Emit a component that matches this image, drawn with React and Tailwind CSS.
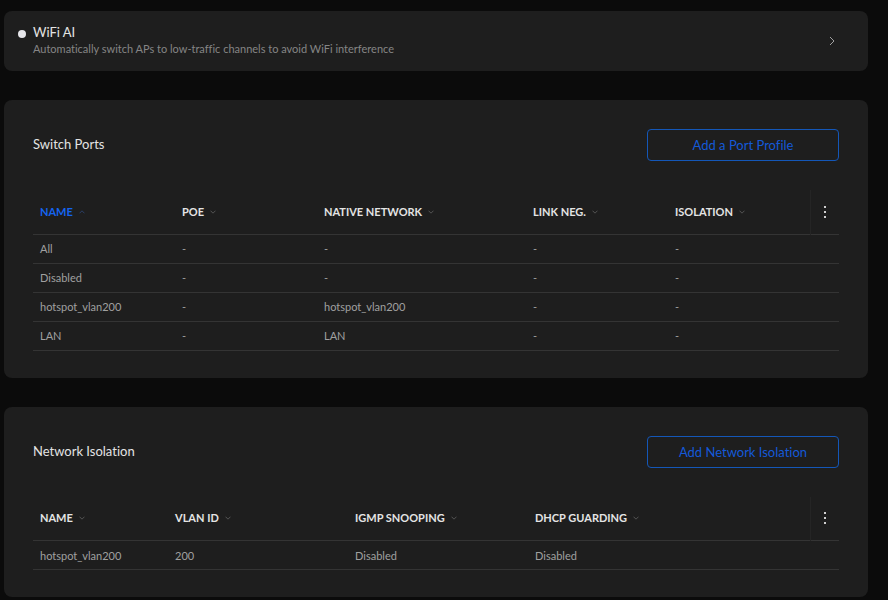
import { useState } from 'react';

const portColumns = [
  { label: 'NAME', width: 'w-[142px]' },
  { label: 'POE', width: 'w-[142px]' },
  { label: 'NATIVE NETWORK', width: 'w-[209px]' },
  { label: 'LINK NEG.', width: 'w-[142px]' },
  { label: 'ISOLATION', width: 'w-[142px]' },
];

const portRows = [
  ['All', '-', '-', '-', '-'],
  ['Disabled', '-', '-', '-', '-'],
  ['hotspot_vlan200', '-', 'hotspot_vlan200', '-', '-'],
  ['LAN', '-', 'LAN', '-', '-'],
];

const isolationColumns = [
  { label: 'NAME', width: 'w-[135px]' },
  { label: 'VLAN ID', width: 'w-[180px]' },
  { label: 'IGMP SNOOPING', width: 'w-[180px]' },
  { label: 'DHCP GUARDING', width: 'w-[282px]' },
];

const isolationRows = [['hotspot_vlan200', '200', 'Disabled', 'Disabled']];

function SortArrow({ up }) {
  return (
    <svg
      className={up ? 'h-1 w-[6px] text-[#2c4470]' : 'h-1 w-[6px] text-[#5a5a5a]'}
      viewBox="0 0 6 4"
      fill="none"
      stroke="currentColor"
      strokeWidth={0.9}
    >
      <path d={up ? 'M0.5 3.3L3 0.8L5.5 3.3' : 'M0.5 0.7L3 3.2L5.5 0.7'} />
    </svg>
  );
}

function DataTable({ columns, rows, initialSort }) {
  const [sortedBy, setSortedBy] = useState(initialSort);

  return (
    <table className="w-full table-fixed border-collapse text-left text-[11px]">
      <thead>
        <tr className="h-11 border-b border-[#343434]">
          {columns.map((column) => {
            const active = sortedBy === column.label;
            return (
              <th key={column.label} className={`${column.width} p-0 pl-[7px]`}>
                <button
                  type="button"
                  onClick={() => setSortedBy(column.label)}
                  className={`flex items-center gap-[6px] font-bold ${active ? 'text-[#1464f0]' : 'text-[#e4e4e4]'}`}
                >
                  {column.label}
                  <SortArrow up={active} />
                </button>
              </th>
            );
          })}
          <th className="w-[29px] border-l border-[#252525] p-0">
            <button type="button" aria-label="Table options" className="flex w-full items-center justify-center">
              <svg className="h-3 w-[2px] text-[#cfcfcf]" viewBox="0 0 2 12" fill="currentColor">
                <rect y="0" width="2" height="2" />
                <rect y="5" width="2" height="2" />
                <rect y="10" width="2" height="2" />
              </svg>
            </button>
          </th>
        </tr>
      </thead>
      <tbody>
        {rows.map((row) => (
          <tr key={row[0]} className="h-[29px] border-b border-[#343434] text-[#a0a0a0]">
            {row.map((cell, i) => (
              <td key={i} className="p-0 pt-[2px] pl-[7px]">
                {cell}
              </td>
            ))}
            <td className="p-0" />
          </tr>
        ))}
      </tbody>
    </table>
  );
}

function Section({ title, action, children }) {
  return (
    <section className="rounded-lg bg-[#1e1e1e] px-[29px] pt-[29px] pb-[27px]">
      <div className="mb-[29px] flex items-center justify-between">
        <h2 className="text-[13px] text-[#e4e4e4]">{title}</h2>
        <button
          type="button"
          className="h-8 w-48 rounded-[4px] border border-[#1457b8] pt-[2px] text-[13px] text-[#1459d8] hover:bg-[#1457d0]/10"
        >
          {action}
        </button>
      </div>
      {children}
    </section>
  );
}

export default function App() {
  return (
    <div className="min-h-screen bg-[#0b0b0b] font-['Lato',sans-serif] [font-variant-ligatures:none]">
      <main className="flex flex-col gap-[29px] pt-[11px] pr-5 pl-1">
        {/* WiFi AI */}
        <button type="button" className="flex h-[60px] items-center rounded-lg bg-[#1e1e1e] pr-8 pl-[14px] text-left">
          <span className="mr-[7px] mb-[14px] h-2 w-2 rounded-full bg-[#e6e6ea]" />
          <span className="flex flex-1 flex-col">
            <span className="text-[13px] leading-4 text-[#e4e4e4]">WiFi AI</span>
            <span className="text-[11px] leading-[18px] text-[#858585]">
              Automatically switch APs to low-traffic channels to avoid WiFi interference
            </span>
          </span>
          <svg className="h-2 w-2 text-[#a0a0a0]" viewBox="0 0 8 8" fill="none" stroke="currentColor">
            <path d="M2 0L6 4L2 8" />
          </svg>
        </button>

        <Section title="Switch Ports" action="Add a Port Profile">
          <DataTable columns={portColumns} rows={portRows} initialSort="NAME" />
        </Section>

        <Section title="Network Isolation" action="Add Network Isolation">
          <DataTable columns={isolationColumns} rows={isolationRows} />
        </Section>
      </main>
    </div>
  );
}
